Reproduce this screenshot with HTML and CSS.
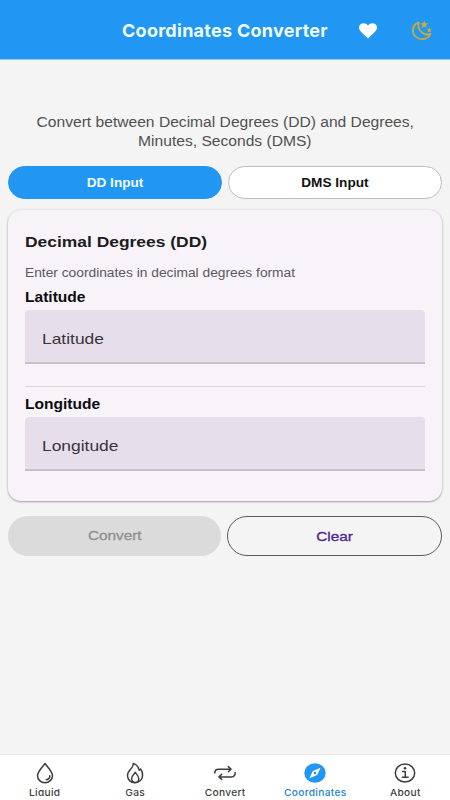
FILE: index.html
```html
<!DOCTYPE html>
<html lang="en">
<head>
<meta charset="utf-8">
<title>Coordinates Converter</title>
<link rel="stylesheet" href="styles.css">
</head>
<body>
<div class="app">
  <header class="topbar">
    <h1 class="title">Coordinates Converter</h1>
    <svg class="heart" viewBox="0 0 18 16"><path fill="#fff" d="M9 15.5 7.600 14.200C3 10 0 7.500 0 4.600 0 2.100 2 .3 4.600 .3 6.300 .3 8 1.100 9 2.500 10 1.100 11.700 .3 13.400 .3 16 .3 18 2.100 18 4.600 18 7.500 15 10 10.400 14.200Z"/></svg>
    <svg class="moon" viewBox="0 0 22 22"><path fill="none" stroke="#c9a83f" stroke-width="1.900" stroke-linejoin="round" d="M7.600 2.800C3.500 4 1.300 7.500 1.500 11.500 1.800 16.500 6 20 10.800 20 14.800 20 18.400 18 19.800 14.500 16.500 15.800 12.800 15 10.200 12.500 7.600 10 6.500 6.500 7.600 2.800Z"/><path fill="#d3aa31" d="m13.300 .5 1.100 2.900 3.100.1-2.400 2 .9 3-2.700-1.700-2.600 1.700.8-3-2.400-2 3.100-.1ZM18.600 7.700l.8 1.900 2.100.1-1.600 1.400.5 2.100-1.800-1.200-1.800 1.200.6-2.100-1.700-1.400 2.100-.1Z"/></svg>
  </header>
  <main class="content">
    <p class="intro"><span>Convert between Decimal Degrees (DD) and Degrees,</span><span>Minutes, Seconds (DMS)</span></p>
    <div class="tabs">
      <button class="tab active"><span>DD Input</span></button>
      <button class="tab"><span>DMS Input</span></button>
    </div>
    <section class="card">
      <h2><span>Decimal Degrees (DD)</span></h2>
      <p class="hint"><span>Enter coordinates in decimal degrees format</span></p>
      <h3><span>Latitude</span></h3>
      <div class="field"><span>Latitude</span></div>
      <hr>
      <h3><span>Longitude</span></h3>
      <div class="field"><span>Longitude</span></div>
    </section>
    <div class="actions">
      <button class="action disabled"><span>Convert</span></button>
      <button class="action clear"><span>Clear</span></button>
    </div>
  </main>
  <nav class="nav">
    <div class="item"><svg viewBox="0 0 22 22"><path d="M11 1.500C8.500 4.800 3.500 9.500 3.500 13.700a7.500 7 0 0 0 15 0C18.500 9.500 13.500 4.800 11 1.500Z"/><path d="M15.800 13.800a4 3.800 0 0 1-3.600 3.900"/></svg><span>Liquid</span></div>
    <div class="item"><svg viewBox="0 0 22 22"><path d="M9.300 1.400C14 3 14.500 6 15.200 8.200L16.600 7C18.200 9 18.800 11.400 18.600 13.600 18.200 18 15 20.700 11 20.700S3.600 18 3.500 13.800C3.400 10.500 5.300 8.500 7 6.800 8.300 5.500 9.500 4 9.300 1.400Z"/><path d="M11.300 10.300C10.800 12 7.700 13.200 7.700 16.800A3.500 3.500 0 0 0 11.300 20.500 3.500 3.500 0 0 0 14.800 16.800C14.800 13.500 12.300 12.500 11.300 10.300Z"/></svg><span>Gas</span></div>
    <div class="item"><svg viewBox="0 0 22 22"><path d="M.8 10.900Q.8 7.200 4.600 7.200H17M14.300 4.600 17.100 7.200 14.300 9.800M21.200 10.500Q21.200 14.900 17.400 14.900H5M7.700 12.300 4.900 14.900 7.700 17.500"/></svg><span>Convert</span></div>
    <div class="item selected"><svg viewBox="0 0 22 22"><ellipse class="disc" cx="11" cy="11" rx="10.700" ry="9.800"/><path class="needle" fill-rule="evenodd" d="M16.600 5.800 13.100 13 5.400 16.200 8.900 9ZM11 9.800a1.300 1.300 0 1 0 0 2.600 1.300 1.300 0 0 0 0-2.600Z"/></svg><span>Coordinates</span></div>
    <div class="item"><svg viewBox="0 0 22 22"><ellipse cx="11" cy="11" rx="9.700" ry="9"/><path d="M8.700 9.400H11.300V15.200M8.300 15.200H14.200"/><circle class="dot" cx="11" cy="6.200" r="1.300"/></svg><span>About</span></div>
  </nav>
</div>
</body>
</html>
```
FILE: styles.css
```css
* { box-sizing: border-box; }
body { margin: 0; font-family: "Liberation Sans", Arial, sans-serif; }
h1, h2, h3, p { margin: 0; }
button { font-family: inherit; padding: 0; border: 0; }
.app { width: 450px; height: 800px; display: flex; flex-direction: column; background: #f4f4f4; overflow: hidden; }
.topbar { height: 60px; flex: none; display: flex; align-items: center; padding: 1px 17px 0 0; background: #2196f3; border-bottom: 1px solid #8fc6f3; }
.title { width: 205px; margin-left: 122px; padding-top: 2px; font: 700 18px/24px Inter, sans-serif; letter-spacing: 0.27px; color: #effcff; white-space: nowrap; }
.heart { width: 18px; height: 16px; margin: 1px 0 0 32px; }
.moon { width: 22px; height: 21px; margin-left: auto; }
.content { flex: 1; padding: 53px 8px 0; }
.content span { display: inline-block; white-space: nowrap; transform-origin: left center; }
.intro { display: flex; flex-direction: column; align-items: center; font-size: 14px; line-height: 19px; color: #505050; }
.intro span { transform: scaleX(1.115); transform-origin: center; }
.tabs { display: grid; grid-template-columns: 214px 214px; gap: 6px; margin-top: 15px; }
.tab { height: 33px; border-radius: 17px; background: #fff; border: 1px solid #bdbdbd; font-size: 12.5px; font-weight: 700; color: #111; }
.content .tab span { transform: scaleX(1.09); transform-origin: center; }
.tab.active { background: #2196f3; border-color: #2196f3; color: #effcff; }
.card { height: 291px; margin-top: 11px; padding: 22px 17px 0; border-radius: 13px; background: #f7f3f9; box-shadow: 0 1px 2px rgba(0,0,0,.3), 0 0 3px rgba(0,0,0,.12); }
h2 { font-size: 15.5px; line-height: 20px; color: #1c1b20; }
h2 span { transform: scaleX(1.124); }
.hint { margin-top: 13px; font-size: 12px; line-height: 16px; color: #5b585e; }
.hint span { transform: scaleX(1.147); }
h3 { margin-top: 7px; font-size: 14px; line-height: 18px; height: 18px; color: #0c0b0e; }
h3 span { transform: scaleX(1.11); }
.field { height: 54px; margin-top: 4px; padding: 4px 17px 0; display: flex; align-items: center; border-radius: 4px 4px 0 0; background: #e6dfeb; border-bottom: 2px solid #c6c0cb; font-size: 15px; color: #38343c; }
.field span { transform: scaleX(1.16); }
hr { height: 1px; margin: 22px 0 8px; border: 0; background: #dcd7df; }
.actions { display: grid; grid-template-columns: 213px 215px; gap: 6px; margin-top: 15px; }
.action { height: 40px; border-radius: 20px; font-size: 13px; }
.content .action span { transform: scaleX(1.18); transform-origin: center; -webkit-text-stroke: .3px currentColor; }
.disabled { background: #dbdbdb; color: #909090; padding-bottom: 2px; }
.clear { background: transparent; border: 1px solid #5c5960; color: #4b2590; }
.nav { height: 46px; flex: none; display: grid; grid-template-columns: repeat(5, 1fr); padding-top: 7px; background: #fff; border-top: 1px solid #e6e6e6; }
.item { display: flex; flex-direction: column; align-items: center; color: #3d3d3d; font: 500 9.5px/14px Inter, sans-serif; letter-spacing: .3px; }
.item svg { width: 22px; height: 22px; flex: none; fill: none; stroke: #3d3d3d; stroke-width: 1.5; stroke-linecap: round; stroke-linejoin: round; }
.item span { height: 12px; line-height: 17px; overflow: hidden; transform: scaleX(1.07); }
.item.selected { color: #1b86ca; }
.item .disc { fill: #2196f3; stroke: none; }
.item .needle { fill: #fff; stroke: none; }
.item .dot { fill: #3d3d3d; stroke: none; }
```
